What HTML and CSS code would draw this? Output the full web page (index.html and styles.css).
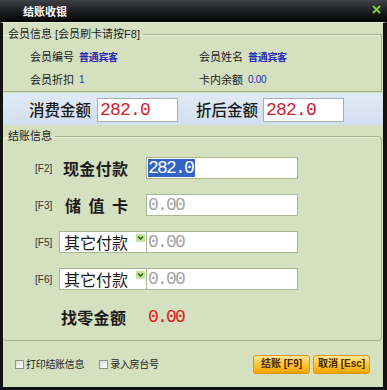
FILE: index.html
```html
<!DOCTYPE html>
<html lang="zh-CN">
<head>
<meta charset="utf-8">
<title>结账收银</title>
<link rel="stylesheet" href="styles.css">
</head>
<body>
<div class="win">
  <div class="titlebar">
    <span class="title">结账收银</span>
    <svg class="close" viewBox="0 0 9 9" width="9" height="9"><path d="M1 1L8 8M8 1L1 8" stroke="#2f5a12" stroke-width="3"/><path d="M1 1L8 8M8 1L1 8" stroke="#9fd24a" stroke-width="1.6"/></svg>
  </div>
  <div class="content">
    <fieldset class="grp member">
      <legend>会员信息 [会员刷卡请按F8]</legend>
      <div class="minfo">
        <span class="lbl">会员编号</span><span class="val">普通宾客</span>
        <span class="lbl">会员姓名</span><span class="val">普通宾客</span>
        <span class="lbl">会员折扣</span><span class="val num">1</span>
        <span class="lbl">卡内余额</span><span class="val num">0.00</span>
      </div>
    </fieldset>
    <div class="band">
      <span class="blabel">消费金额</span><div class="bfield">282.0</div>
      <span class="blabel second">折后金额</span><div class="bfield">282.0</div>
    </div>
    <fieldset class="grp settle">
      <legend>结账信息</legend>
      <div class="pay-rows">
        <div class="pay-row"><span class="key">[F2]</span><span class="pname">现金付款</span><div class="field"><span class="sel">282.0</span></div></div>
        <div class="pay-row"><span class="key">[F3]</span><span class="pname spaced">储值卡</span><div class="field">0.00</div></div>
        <div class="pay-row"><span class="key">[F5]</span><div class="combo"><span>其它付款</span><span class="arrow"><svg viewBox="0 0 9 8" width="9" height="8"><path d="M2 2.5L4.5 5L7 2.5" fill="none" stroke="#2f6a10" stroke-width="1.6"/></svg></span></div><div class="field">0.00</div></div>
        <div class="pay-row"><span class="key">[F6]</span><div class="combo"><span>其它付款</span><span class="arrow"><svg viewBox="0 0 9 8" width="9" height="8"><path d="M2 2.5L4.5 5L7 2.5" fill="none" stroke="#2f6a10" stroke-width="1.6"/></svg></span></div><div class="field">0.00</div></div>
      </div>
      <div class="change-row"><span class="clabel">找零金额</span><span class="cval">0.00</span></div>
    </fieldset>
    <div class="footer">
      <span class="cb"></span><span class="cbtext">打印结账信息</span>
      <span class="cb second"></span><span class="cbtext">录入房台号</span>
      <div class="btns">
        <button class="btn">结账 [F9]</button>
        <button class="btn">取消 [Esc]</button>
      </div>
    </div>
  </div>
</div>
</body>
</html>
```
FILE: styles.css
```css
body {
  margin: 0;
  background: #ffffff;
}
.win {
  width: 387px;
  height: 390px;
  display: flex;
  flex-direction: column;
  font-family: "Noto Sans CJK SC", "Noto Sans", sans-serif;
  color: #1b1b1b;
}
.titlebar {
  height: 22px;
  flex: none;
  display: flex;
  align-items: center;
  box-sizing: border-box;
  padding: 0 6px 0 23px;
  background: linear-gradient(#3e4145, #1a1b1d 55%, #050505);
}
.title {
  color: #ffffff;
  font-size: 11px;
  font-weight: bold;
  line-height: 1;
}
.close {
  margin-left: auto;
  margin-top: -3px;
}
.content {
  flex: 1;
  display: flex;
  flex-direction: column;
  background: #d4e0bf;
  border-style: solid;
  border-color: #e6edd8 #121212 #121212 #121212;
  border-width: 1px 4px 3px 3px;
}
.grp {
  margin: 0 1px 0 0;
  padding: 0;
  min-width: 0;
  border: 1px solid #a3b08a;
  border-left: none;
  box-shadow: inset 0 1px 0 #e9efdc;
}
.grp legend {
  padding: 0 3px 0 5px;
  font-family: "Liberation Sans", "Noto Sans CJK SC", sans-serif;
  font-size: 11px;
  line-height: 16px;
}
.member {
  margin-top: 3px;
}
.minfo {
  display: grid;
  grid-template-columns: 49px 120px 49px 1fr;
  grid-auto-rows: 23px;
  align-items: center;
  padding: 3px 0 0 27px;
  font-size: 11px;
  line-height: 1;
}
.val {
  color: #2a2ab8;
  font-size: 10px;
  font-weight: bold;
  letter-spacing: -0.3px;
}
.val.num {
  font-family: "Liberation Sans", sans-serif;
  font-weight: normal;
}
.band {
  margin-top: 1px;
  height: 32px;
  box-sizing: border-box;
  padding: 2px 0 0 26px;
  display: flex;
  align-items: center;
  background: linear-gradient(#e0eaf6, #d2dfee);
}
.blabel {
  width: 62px;
  margin-right: 6px;
  font-size: 15.5px;
  font-weight: 500;
  line-height: 1;
  white-space: nowrap;
  color: #1a1a1a;
}
.blabel.second {
  margin-left: 18px;
  margin-right: 5px;
}
.bfield {
  width: 81px;
  height: 24px;
  box-sizing: border-box;
  display: flex;
  align-items: center;
  padding-left: 2px;
  background: #ffffff;
  border: 1px solid #a7b0a8;
  color: #d0202c;
  font-family: "Liberation Mono", monospace;
  font-size: 18px;
  letter-spacing: -0.8px;
}
.settle {
  margin-top: 3px;
  border-radius: 4px;
  box-shadow: inset 1px 1px 0 #eaf0de;
}
.pay-rows {
  display: flex;
  flex-direction: column;
  gap: 15px;
  padding: 13px 0 0 32px;
}
.pay-row {
  display: flex;
  align-items: center;
  height: 22px;
}
.key {
  width: 24px;
  font-family: "Liberation Sans", sans-serif;
  font-size: 10px;
  color: #333333;
}
.pname {
  width: 87px;
  box-sizing: border-box;
  padding-left: 4px;
  font-size: 16px;
  font-weight: bold;
  letter-spacing: 0.3px;
  line-height: 1;
}
.pname.spaced {
  padding-left: 6px;
  letter-spacing: 7.5px;
}
.field {
  width: 152px;
  height: 22px;
  box-sizing: border-box;
  display: flex;
  align-items: center;
  padding-left: 1px;
  background: #ffffff;
  border: 1px solid #a9b78e;
  color: #a3a3a3;
  font-family: "Liberation Mono", monospace;
  font-size: 18px;
  letter-spacing: -1.8px;
}
.sel {
  background: #3163c4;
  color: #ffffff;
  line-height: 18px;
  padding-right: 2px;
}
.combo {
  width: 87px;
  height: 22px;
  box-sizing: border-box;
  display: flex;
  align-items: center;
  padding-left: 4px;
  background: #ffffff;
  border: 1px solid #a9b78e;
  border-right: none;
  font-size: 16px;
  line-height: 1;
}
.arrow {
  margin-left: auto;
  margin-right: 1px;
  align-self: flex-start;
  margin-top: 2px;
  width: 9px;
  height: 8px;
  display: flex;
  background: #c9e2a0;
}
.change-row {
  display: flex;
  align-items: center;
  height: 22px;
  margin-top: 16px;
  padding: 0 0 12px 58px;
}
.clabel {
  width: 87px;
  font-size: 16px;
  font-weight: bold;
  letter-spacing: 0.3px;
  line-height: 1;
}
.cval {
  color: #e01a24;
  font-family: "Liberation Mono", monospace;
  font-size: 18px;
  letter-spacing: -1.8px;
}
.footer {
  flex: 1;
  display: flex;
  align-items: center;
  padding: 0 13px 0 12px;
  font-size: 10px;
}
.cb {
  width: 9px;
  height: 9px;
  box-sizing: border-box;
  margin-right: 2px;
  border: 1px solid #8e9486;
  background: linear-gradient(135deg, #dcdcd4, #ffffff);
}
.cb.second {
  margin-left: 15px;
}
.cbtext {
  line-height: 1;
  letter-spacing: -0.3px;
  color: #222222;
}
.btns {
  margin-left: auto;
  display: flex;
  gap: 3px;
}
.btn {
  width: 57px;
  height: 19px;
  padding: 0;
  border: 1px solid #e2960c;
  border-radius: 3px;
  background: linear-gradient(#ffe796, #ffc93c 45%, #f7a300);
  font-family: "Liberation Sans", "Noto Sans CJK SC", sans-serif;
  font-size: 10px;
  font-weight: bold;
  color: #4a2800;
  line-height: 1;
}
```
